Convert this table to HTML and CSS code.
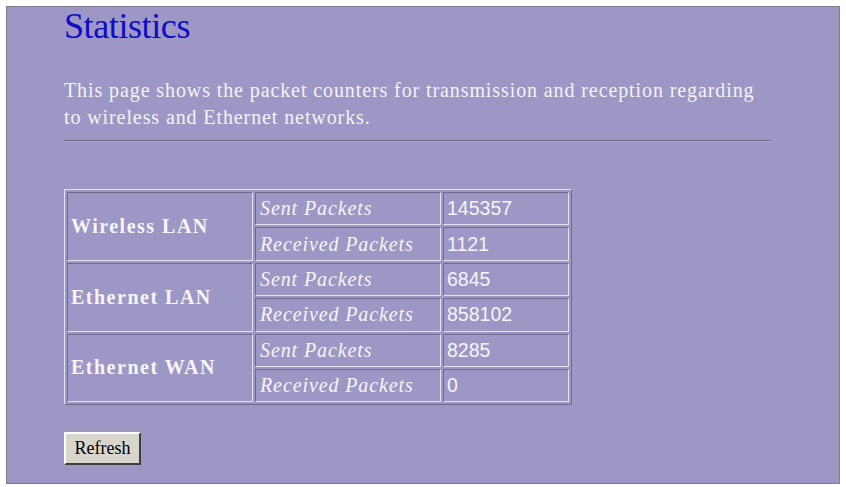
FILE: index.html
```html
<!DOCTYPE html>
<html>
<head>
<meta charset="utf-8">
<title>Statistics</title>
<link rel="stylesheet" href="styles.css">
</head>
<body>
<div class="panel">
  <h1 class="title">Statistics</h1>
  <p class="intro">This page shows the packet counters for transmission and reception regarding to wireless and Ethernet networks.</p>
  <hr class="rule">
  <table class="stats">
    <tr>
      <td class="group" rowspan="2">Wireless LAN</td>
      <td class="label">Sent Packets</td>
      <td class="value">145357</td>
    </tr>
    <tr>
      <td class="label">Received Packets</td>
      <td class="value">1121</td>
    </tr>
    <tr>
      <td class="group" rowspan="2">Ethernet LAN</td>
      <td class="label">Sent Packets</td>
      <td class="value">6845</td>
    </tr>
    <tr>
      <td class="label">Received Packets</td>
      <td class="value">858102</td>
    </tr>
    <tr>
      <td class="group" rowspan="2">Ethernet WAN</td>
      <td class="label">Sent Packets</td>
      <td class="value">8285</td>
    </tr>
    <tr>
      <td class="label">Received Packets</td>
      <td class="value">0</td>
    </tr>
  </table>
  <button class="refresh" type="button">Refresh</button>
</div>
</body>
</html>
```
FILE: styles.css
```css
html, body {
  margin: 0;
  padding: 0;
  background: #ffffff;
}

body {
  font-family: "Liberation Serif", serif;
}

.panel {
  box-sizing: border-box;
  margin: 6px 0 0 6px;
  width: 834px;
  height: 478px;
  border: 1px solid #7f7c92;
  background: #9c97c4;
  padding: 0 0 0 57px;
}

.title {
  margin: 0;
  padding-top: 1px;
  font-size: 36px;
  line-height: 36px;
  font-weight: normal;
  letter-spacing: -0.4px;
  color: #0c0cc8;
}

.intro {
  margin: 33px 0 0 0;
  width: 700px;
  font-size: 20px;
  line-height: 27px;
  color: #f4f3fa;
  letter-spacing: 0.9px;
}

.rule {
  margin: 9px 0 0 0;
  width: 707px;
  height: 0;
  border: 0;
  border-top: 1px solid #6d6985;
  border-bottom: 1px solid #a9a5cc;
}

.stats {
  margin-top: 47px;
  border-collapse: separate;
  border-spacing: 2px;
  border: 1px solid;
  border-color: #e4e2f0 #6f6b8f #6f6b8f #e4e2f0;
}

.stats td {
  height: 31.4px;
  padding: 0;
  border: 1px solid;
  border-color: #6f6b8f #e4e2f0 #e4e2f0 #6f6b8f;
  color: #f6f5fb;
  vertical-align: middle;
}

.group {
  width: 181px;
  padding-left: 3px !important;
  font-weight: bold;
  font-size: 20px;
  letter-spacing: 1.5px;
}

.label {
  width: 180px;
  padding-left: 4px !important;
  font-style: italic;
  font-size: 20px;
  letter-spacing: 0.9px;
}

.value {
  width: 121px;
  padding-left: 3px !important;
  font-family: "Liberation Sans", sans-serif;
  font-size: 19.5px;
  font-weight: 300;
}

.refresh {
  display: block;
  margin-top: 27px;
  width: 77px;
  height: 33px;
  padding: 0;
  background: #d8d5cc;
  border: 2px solid;
  border-color: #ffffff #404040 #404040 #ffffff;
  font-family: "Liberation Serif", serif;
  font-size: 18px;
  color: #000000;
}
```
